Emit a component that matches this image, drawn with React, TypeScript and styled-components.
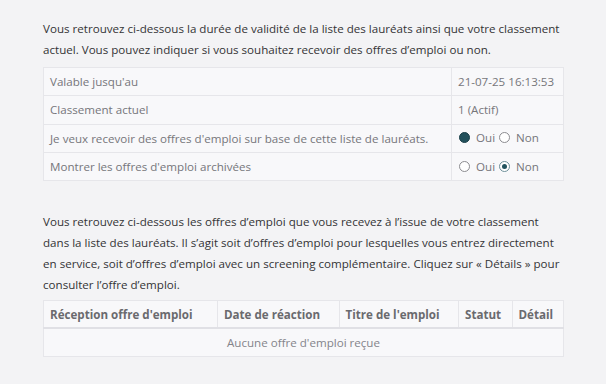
import React from 'react';
import styled, { createGlobalStyle } from 'styled-components';

const GlobalStyle = createGlobalStyle`
  html, body {
    margin: 0;
    padding: 0;
    background: #f3f3f5;
  }
  body {
    font-family: 'Open Sans', 'Noto Sans', sans-serif;
    color: #333;
  }
`;

const Page = styled.div`
  width: 606px;
  height: 384px;
  padding: 17.5px 43px 0;
  box-sizing: border-box;
  overflow: hidden;
`;

const Intro = styled.p<{ $top?: number }>`
  margin: ${(p) => p.$top ?? 0}px 0 0;
  font-size: 11.6px;
  line-height: 21px;
  color: #343436;
`;

const Table = styled.table<{ $top: number }>`
  width: 520px;
  margin-top: ${(p) => p.$top}px;
  border-collapse: collapse;
  table-layout: fixed;
  background: #f8f8fa;
  font-size: 11.6px;
  color: #76767a;
`;

const Row = styled.tr<{ $height?: number }>`
  height: ${(p) => p.$height ?? 28.3}px;
`;

const Cell = styled.td`
  border: 1px solid #e6e6ea;
  padding: 0 6px;
  white-space: nowrap;
  overflow: hidden;
`;

const HeadCell = styled.th`
  border: 1px solid #e6e6ea;
  border-bottom: 2px solid #e0e0e5;
  padding: 0 6px;
  text-align: left;
  font-weight: 700;
  color: #6a6a6e;
  white-space: nowrap;
`;

const EmptyCell = styled.td`
  border: 1px solid #e6e6ea;
  text-align: center;
  color: #84848a;
`;

const RadioGroup = styled.span`
  display: inline-flex;
  align-items: center;
  padding-left: 1px;
`;

const RadioDot = styled.span<{ $variant: 'filled' | 'ring' | 'empty' }>`
  position: relative;
  display: inline-block;
  box-sizing: border-box;
  width: 11px;
  height: 11px;
  border-radius: 50%;
  margin-right: 6px;
  border: 1px solid
    ${(p) => (p.$variant === 'filled' ? '#1b3f48' : p.$variant === 'ring' ? '#6d8f99' : '#8c8c90')};
  background: ${(p) => (p.$variant === 'filled' ? '#22505b' : '#fff')};

  &::after {
    content: '';
    display: ${(p) => (p.$variant === 'ring' ? 'block' : 'none')};
    position: absolute;
    inset: 2px;
    border-radius: 50%;
    background: #22535e;
  }
`;

const RadioLabel = styled.span`
  color: #76767a;
  margin-right: 4px;
`;

const Radio: React.FC<{ variant: 'filled' | 'ring' | 'empty'; label: string }> = ({ variant, label }) => (
  <>
    <RadioDot $variant={variant} />
    <RadioLabel>{label}</RadioLabel>
  </>
);

export default function App() {
  return (
    <Page>
      <GlobalStyle />
      <Intro>
        Vous retrouvez ci-dessous la durée de validité de la liste des lauréats ainsi que votre classement
        actuel. Vous pouvez indiquer si vous souhaitez recevoir des offres d’emploi ou non.
      </Intro>
      <Table $top={7.5}>
        <colgroup>
          <col style={{ width: 408 }} />
          <col style={{ width: 112 }} />
        </colgroup>
        <tbody>
          <Row>
            <Cell>Valable jusqu'au</Cell>
            <Cell>21-07-25 16:13:53</Cell>
          </Row>
          <Row>
            <Cell>Classement actuel</Cell>
            <Cell>1 (Actif)</Cell>
          </Row>
          <Row>
            <Cell>Je veux recevoir des offres d'emploi sur base de cette liste de lauréats.</Cell>
            <Cell>
              <RadioGroup>
                <Radio variant="filled" label="Oui" />
                <Radio variant="empty" label="Non" />
              </RadioGroup>
            </Cell>
          </Row>
          <Row>
            <Cell>Montrer les offres d'emploi archivées</Cell>
            <Cell>
              <RadioGroup>
                <Radio variant="empty" label="Oui" />
                <Radio variant="ring" label="Non" />
              </RadioGroup>
            </Cell>
          </Row>
        </tbody>
      </Table>
      <Intro $top={29.5}>
        Vous retrouvez ci-dessous les offres d’emploi que vous recevez à l’issue de votre classement
        dans la liste des lauréats. Il s’agit soit d’offres d’emploi pour lesquelles vous entrez directement
        en service, soit d’offres d’emploi avec un screening complémentaire. Cliquez sur « Détails » pour
        consulter l’offre d’emploi.
      </Intro>
      <Table $top={5}>
        <colgroup>
          <col style={{ width: 174 }} />
          <col style={{ width: 121.5 }} />
          <col style={{ width: 119.5 }} />
          <col style={{ width: 53.5 }} />
          <col style={{ width: 51.5 }} />
        </colgroup>
        <thead>
          <Row>
            <HeadCell>Réception offre d'emploi</HeadCell>
            <HeadCell>Date de réaction</HeadCell>
            <HeadCell>Titre de l'emploi</HeadCell>
            <HeadCell>Statut</HeadCell>
            <HeadCell>Détail</HeadCell>
          </Row>
        </thead>
        <tbody>
          <Row $height={28.5}>
            <EmptyCell colSpan={5}>Aucune offre d'emploi reçue</EmptyCell>
          </Row>
        </tbody>
      </Table>
    </Page>
  );
}
